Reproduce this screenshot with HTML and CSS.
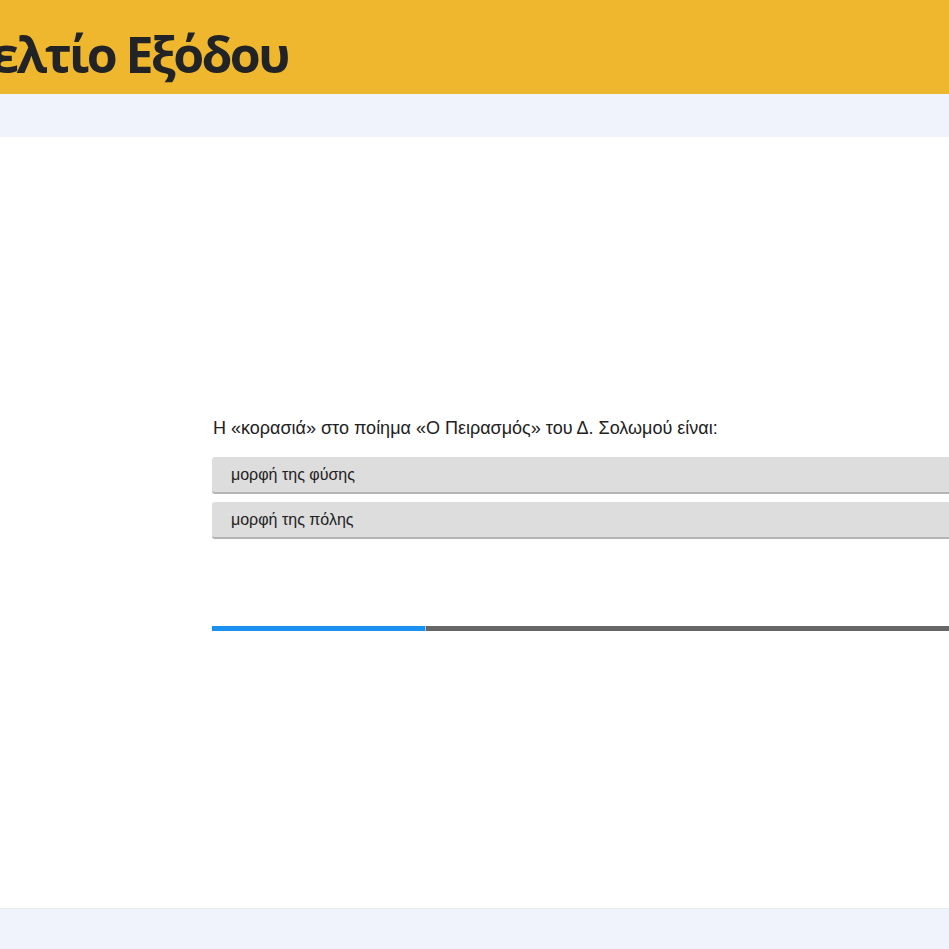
FILE: index.html
```html
<!DOCTYPE html>
<html lang="el">
<head>
<meta charset="utf-8">
<title>Δελτίο Εξόδου</title>
<link rel="stylesheet" href="styles.css">
</head>
<body>
<header class="top">
  <h1 class="title">Δελτίο Εξόδου</h1>
</header>
<div class="band"></div>
<main class="main">
  <section class="quiz">
    <p class="question">Η «κορασιά» στο ποίημα «Ο Πειρασμός» του Δ. Σολωμού είναι:</p>
    <div class="options">
      <button class="option">μορφή της φύσης</button>
      <button class="option">μορφή της πόλης</button>
    </div>
    <div class="progress">
      <div class="progress-fill" style="width: 213px"></div>
    </div>
  </section>
</main>
<footer class="bottom"></footer>
</body>
</html>
```
FILE: styles.css
```css
html, body {
  margin: 0;
  padding: 0;
}
body {
  width: 949px;
  height: 949px;
  overflow: hidden;
  background: #ffffff;
  display: flex;
  flex-direction: column;
  font-family: "Liberation Sans", Arial, sans-serif;
}
.top {
  height: 94px;
  flex: 0 0 94px;
  background: #efb72e;
  box-sizing: border-box;
  padding-top: 20px;
  overflow: hidden;
}
.title {
  margin: 0 0 0 -39px;
  font-family: "Open Sans", sans-serif;
  font-weight: 700;
  font-size: 50px;
  letter-spacing: -2.6px;
  line-height: normal;
  color: #222326;
  white-space: nowrap;
}
.band {
  flex: 0 0 43px;
  background: #f0f3fb;
}
.main {
  flex: 1 1 auto;
  display: flex;
  align-items: center;
  overflow: hidden;
}
.quiz {
  margin-left: 212px;
  width: 900px;
  flex: 0 0 900px;
  padding-top: 4px;
}
.question {
  margin: 0 0 18px 1px;
  font-size: 18px;
  color: #222222;
  line-height: normal;
}
.options {
  display: flex;
  flex-direction: column;
  gap: 8px;
}
.option {
  display: block;
  width: 100%;
  height: 37px;
  box-sizing: border-box;
  border: none;
  border-bottom: 2px solid #b4b4b4;
  border-radius: 3px;
  background: #dddddd;
  padding: 0 0 0 19px;
  text-align: left;
  font-family: "Liberation Sans", Arial, sans-serif;
  font-size: 16px;
  color: #222222;
}
.progress {
  margin-top: 87px;
  height: 5px;
  background: #666666;
}
.progress-fill {
  height: 100%;
  background: #1a90f0;
  border-right: 1px solid #9cc8ee;
}
.bottom {
  flex: 0 0 40px;
  background: #f0f3fb;
  border-top: 1px solid #e8ecf4;
}
```
